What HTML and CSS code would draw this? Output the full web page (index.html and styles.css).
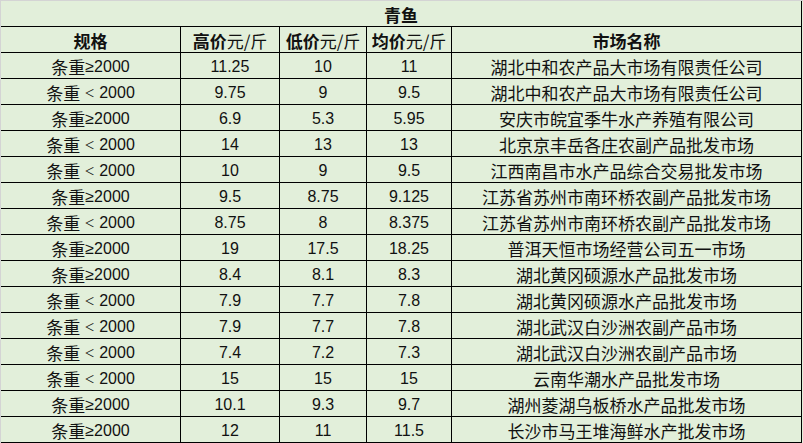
FILE: index.html
```html
<!DOCTYPE html>
<html lang="zh-CN">
<head>
<meta charset="utf-8">
<title>青鱼</title>
<link rel="stylesheet" href="styles.css">
</head>
<body>
<div class="sheet">
  <div class="grid">
    <div class="cell title">青鱼</div>

    <div class="cell head">规格</div>
    <div class="cell head">高价<span class="unit">元/斤</span></div>
    <div class="cell head">低价<span class="unit">元/斤</span></div>
    <div class="cell head">均价<span class="unit">元/斤</span></div>
    <div class="cell head">市场名称</div>

    <div class="cell spec">条重<span class="n">≥2000</span></div><div class="cell num">11.25</div><div class="cell num">10</div><div class="cell num">11</div><div class="cell name">湖北中和农产品大市场有限责任公司</div>
    <div class="cell spec">条重<span class="lt">＜</span><span class="n">2000</span></div><div class="cell num">9.75</div><div class="cell num">9</div><div class="cell num">9.5</div><div class="cell name">湖北中和农产品大市场有限责任公司</div>
    <div class="cell spec">条重<span class="n">≥2000</span></div><div class="cell num">6.9</div><div class="cell num">5.3</div><div class="cell num">5.95</div><div class="cell name">安庆市皖宜季牛水产养殖有限公司</div>
    <div class="cell spec">条重<span class="lt">＜</span><span class="n">2000</span></div><div class="cell num">14</div><div class="cell num">13</div><div class="cell num">13</div><div class="cell name">北京京丰岳各庄农副产品批发市场</div>
    <div class="cell spec">条重<span class="lt">＜</span><span class="n">2000</span></div><div class="cell num">10</div><div class="cell num">9</div><div class="cell num">9.5</div><div class="cell name">江西南昌市水产品综合交易批发市场</div>
    <div class="cell spec">条重<span class="n">≥2000</span></div><div class="cell num">9.5</div><div class="cell num">8.75</div><div class="cell num">9.125</div><div class="cell name">江苏省苏州市南环桥农副产品批发市场</div>
    <div class="cell spec">条重<span class="lt">＜</span><span class="n">2000</span></div><div class="cell num">8.75</div><div class="cell num">8</div><div class="cell num">8.375</div><div class="cell name">江苏省苏州市南环桥农副产品批发市场</div>
    <div class="cell spec">条重<span class="n">≥2000</span></div><div class="cell num">19</div><div class="cell num">17.5</div><div class="cell num">18.25</div><div class="cell name">普洱天恒市场经营公司五一市场</div>
    <div class="cell spec">条重<span class="n">≥2000</span></div><div class="cell num">8.4</div><div class="cell num">8.1</div><div class="cell num">8.3</div><div class="cell name">湖北黄冈硕源水产品批发市场</div>
    <div class="cell spec">条重<span class="lt">＜</span><span class="n">2000</span></div><div class="cell num">7.9</div><div class="cell num">7.7</div><div class="cell num">7.8</div><div class="cell name">湖北黄冈硕源水产品批发市场</div>
    <div class="cell spec">条重<span class="lt">＜</span><span class="n">2000</span></div><div class="cell num">7.9</div><div class="cell num">7.7</div><div class="cell num">7.8</div><div class="cell name">湖北武汉白沙洲农副产品市场</div>
    <div class="cell spec">条重<span class="lt">＜</span><span class="n">2000</span></div><div class="cell num">7.4</div><div class="cell num">7.2</div><div class="cell num">7.3</div><div class="cell name">湖北武汉白沙洲农副产品市场</div>
    <div class="cell spec">条重<span class="lt">＜</span><span class="n">2000</span></div><div class="cell num">15</div><div class="cell num">15</div><div class="cell num">15</div><div class="cell name">云南华潮水产品批发市场</div>
    <div class="cell spec">条重<span class="n">≥2000</span></div><div class="cell num">10.1</div><div class="cell num">9.3</div><div class="cell num">9.7</div><div class="cell name">湖州菱湖乌板桥水产品批发市场</div>
    <div class="cell spec">条重<span class="n">≥2000</span></div><div class="cell num">12</div><div class="cell num">11</div><div class="cell num">11.5</div><div class="cell name">长沙市马王堆海鲜水产批发市场</div>
  </div>
</div>
</body>
</html>
```

FILE: styles.css
```css
html, body {
  margin: 0;
  padding: 0;
  background: #e2efda;
}

.sheet {
  width: 802px;
  height: 442px;
  border-top: 1px solid #d4d4d4;
  border-left: 1px solid #d4d4d4;
  background: #e2efda;
  overflow: hidden;
}

.grid {
  display: grid;
  grid-template-columns: 179px 98px 86px 84px 349px;
  grid-auto-rows: 25px;
  gap: 1px;
  padding: 0 1px 1px 0;
  background: #000;
  width: max-content;
}

.cell {
  background: #e2efda;
  display: flex;
  align-items: center;
  justify-content: center;
  padding-top: 2px;
  box-sizing: border-box;
  color: #111;
  font-family: "Noto Sans CJK SC", "Liberation Sans", sans-serif;
  font-size: 17px;
  line-height: 20px;
  white-space: nowrap;
}

.title {
  grid-column: 1 / -1;
  font-weight: bold;
}

.head {
  font-weight: bold;
}

.unit {
  font-weight: normal;
}

.num,
.n {
  font-family: "Liberation Sans", "Noto Sans CJK SC", sans-serif;
  font-size: 16px;
}

.lt {
  display: inline-block;
  width: 19px;
  text-align: center;
  transform: scale(0.62);
}
```
